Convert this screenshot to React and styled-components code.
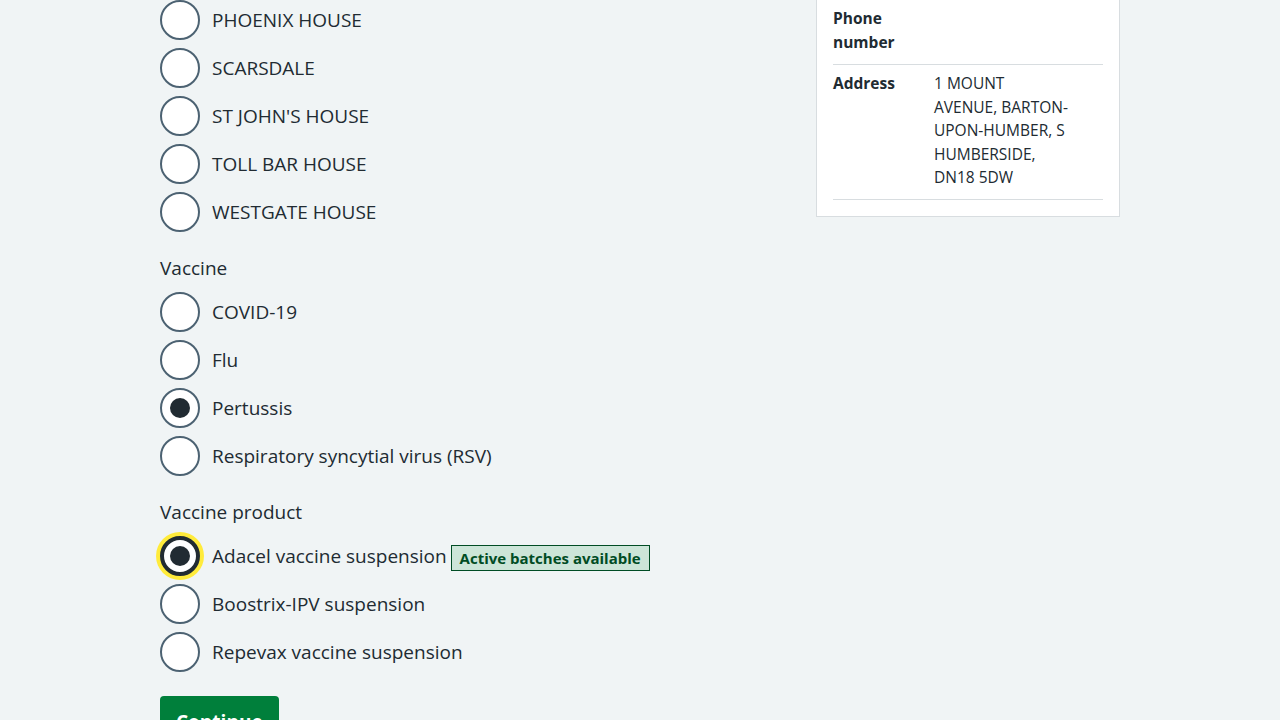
import React from "react";
import styled, { createGlobalStyle, css } from "styled-components";

const Global = createGlobalStyle`
  html, body { margin: 0; padding: 0; }
  body {
    background: #f0f4f5;
    color: #212b32;
    font-family: "Open Sans", "Liberation Sans", sans-serif;
    overflow: hidden;
  }
  * { box-sizing: border-box; }
`;

const Container = styled.div`
  width: 960px;
  margin: 0 auto;
`;

const Grid = styled.div`
  display: grid;
  grid-template-columns: 640px 1fr;
  align-items: start;
`;

const Main = styled.div`
  display: flex;
  flex-direction: column;
`;

const Aside = styled.aside`
  padding-left: 16px;
`;

const Fieldset = styled.fieldset`
  border: 0;
  margin: 0 0 24px;
  padding: 0;
  min-width: 0;
`;

const Legend = styled.legend`
  padding: 0;
  font-size: 19px;
  line-height: 24px;
  margin-bottom: 12px;
`;

const Radios = styled.div`
  display: flex;
  flex-direction: column;
  gap: 8px;
`;

const RadioItem = styled.label`
  display: flex;
  align-items: center;
  min-height: 40px;
  cursor: pointer;
`;

const RadioMark = styled.span`
  flex: 0 0 40px;
  width: 40px;
  height: 40px;
  border-radius: 50%;
  background: #ffffff;
  border: 2px solid #4c6272;
  display: flex;
  align-items: center;
  justify-content: center;
  ${(p) =>
    p.$focused &&
    css`
      border: 4px solid #212b32;
      box-shadow: 0 0 0 4px #ffeb3b;
    `}
  &::after {
    content: "";
    width: 20px;
    height: 20px;
    border-radius: 50%;
    background: #212b32;
    display: ${(p) => (p.$checked ? "block" : "none")};
  }
`;

const RadioText = styled.span`
  padding-left: 12px;
  font-size: 19px;
  line-height: 28px;
`;

const Tag = styled.strong`
  display: inline-block;
  margin-left: -1px;
  padding: 4px 8px;
  font-size: 15px;
  line-height: 16px;
  font-weight: 700;
  color: #004c24;
  background: #cce5d8;
  border: 1px solid #004c24;
  vertical-align: -1px;
`;

const Button = styled.button`
  align-self: flex-start;
  background: #007f3b;
  color: #ffffff;
  border: 0;
  border-radius: 4px;
  box-shadow: 0 4px 0 #00401e;
  padding: 12px 16px;
  font-family: inherit;
  font-size: 19px;
  font-weight: 700;
  line-height: 28px;
  cursor: pointer;
`;

const Card = styled.div`
  margin-top: -18px;
  background: #ffffff;
  border: 1px solid #d8dde0;
  padding: 16px;
`;

const SummaryList = styled.dl`
  margin: 0;
  font-size: 15.5px;
  line-height: 23.5px;
`;

const SummaryRow = styled.div`
  display: grid;
  grid-template-columns: 101px 1fr;
  border-bottom: 1px solid #d8dde0;
  padding: 7px 0 9px;
  &:first-child {
    padding: 8px 0 10px;
  }
`;

const Key = styled.dt`
  font-weight: 700;
  margin: 0;
  padding-right: 16px;
`;

const Value = styled.dd`
  margin: 0;
`;

const Line = styled.span`
  display: block;
  white-space: nowrap;
`;

const Radio = ({ label, checked, focused, children }) => (
  <RadioItem>
    <RadioMark $checked={checked} $focused={focused} />
    <RadioText>
      {label}
      {children}
    </RadioText>
  </RadioItem>
);

const sites = ["PHOENIX HOUSE", "SCARSDALE", "ST JOHN'S HOUSE", "TOLL BAR HOUSE", "WESTGATE HOUSE"];
const vaccines = ["COVID-19", "Flu", "Pertussis", "Respiratory syncytial virus (RSV)"];
const addressLines = ["1 MOUNT", "AVENUE, BARTON-", "UPON-HUMBER, S", "HUMBERSIDE,", "DN18 5DW"];

export default function App() {
  return (
    <>
      <Global />
      <Container>
        <Grid>
          <Main>
            <Fieldset>
              <Radios>
                {sites.map((s) => (
                  <Radio key={s} label={s} />
                ))}
              </Radios>
            </Fieldset>
            <Fieldset>
              <Legend>Vaccine</Legend>
              <Radios>
                {vaccines.map((v) => (
                  <Radio key={v} label={v} checked={v === "Pertussis"} />
                ))}
              </Radios>
            </Fieldset>
            <Fieldset>
              <Legend>Vaccine product</Legend>
              <Radios>
                <Radio label="Adacel vaccine suspension" checked focused>
                  {" "}
                  <Tag>Active batches available</Tag>
                </Radio>
                <Radio label="Boostrix-IPV suspension" />
                <Radio label="Repevax vaccine suspension" />
              </Radios>
            </Fieldset>
            <Button>Continue</Button>
          </Main>
          <Aside>
            <Card>
              <SummaryList>
                <SummaryRow>
                  <Key>Phone number</Key>
                  <Value></Value>
                </SummaryRow>
                <SummaryRow>
                  <Key>Address</Key>
                  <Value>
                    {addressLines.map((l) => (
                      <Line key={l}>{l}</Line>
                    ))}
                  </Value>
                </SummaryRow>
              </SummaryList>
            </Card>
          </Aside>
        </Grid>
      </Container>
    </>
  );
}
